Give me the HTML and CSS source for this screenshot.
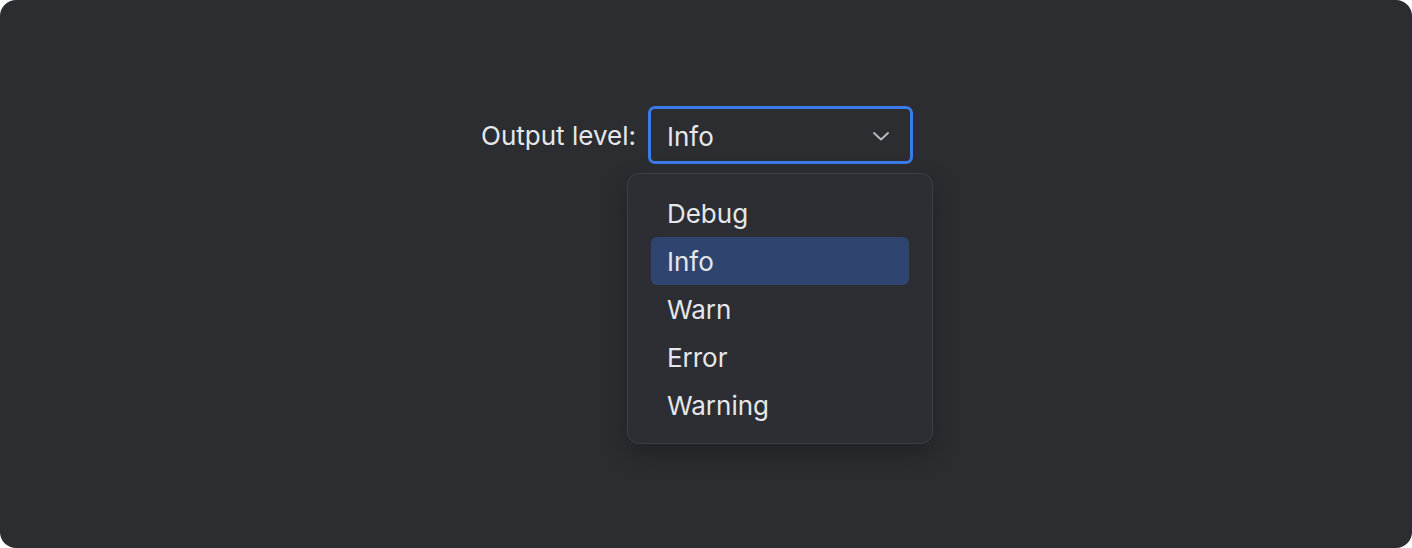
FILE: index.html
```html
<!DOCTYPE html>
<html>
<head>
<meta charset="utf-8">
<link rel="stylesheet" href="styles.css">
</head>
<body>
<div class="page">
  <div class="row">
    <span class="label">Output level:</span>
    <div class="field">
      <div class="select">
        <span class="value">Info</span>
        <svg class="chev" width="18" height="10" viewBox="0 0 18 10"><path d="M2 2 L9 8.5 L16 2" fill="none" stroke="#b9bbc0" stroke-width="1.9" stroke-linecap="round" stroke-linejoin="round"/></svg>
      </div>
      <div class="menu">
        <div class="item">Debug</div>
        <div class="item active">Info</div>
        <div class="item">Warn</div>
        <div class="item">Error</div>
        <div class="item">Warning</div>
      </div>
    </div>
  </div>
</div>
</body>
</html>
```
FILE: styles.css
```css
html, body {
  margin: 0;
  padding: 0;
  background: #ffffff;
}
.page {
  width: 1412px;
  height: 548px;
  box-sizing: border-box;
  background: #2b2d31;
  border-radius: 16px;
  padding-top: 106px;
  font-family: Inter, "Noto Sans", sans-serif;
  color: #e6e7ea;
}
.row {
  display: flex;
  justify-content: center;
  align-items: flex-start;
  gap: 12px;
  padding-right: 18px;
}
.label {
  font-size: 26px;
  line-height: 60px;
}
.field {
  position: relative;
}
.select {
  width: 265px;
  height: 58px;
  box-sizing: border-box;
  border: 3px solid #3a7bea;
  border-radius: 7px;
  display: flex;
  align-items: center;
  justify-content: space-between;
  padding: 2px 20px 0 16px;
  font-size: 26px;
}
.menu {
  position: absolute;
  top: 67px;
  left: -21px;
  width: 306px;
  box-sizing: border-box;
  background: #2c2e33;
  border: 1px solid #3d3f45;
  border-radius: 12px;
  padding: 15px 23px 14px;
  box-shadow: 0 10px 24px rgba(0,0,0,0.25);
  display: flex;
  flex-direction: column;
}
.item {
  height: 48px;
  display: flex;
  align-items: center;
  padding-left: 16px;
  border-radius: 6px;
  font-size: 26px;
}
.item.active {
  background: #2f4570;
}
```
